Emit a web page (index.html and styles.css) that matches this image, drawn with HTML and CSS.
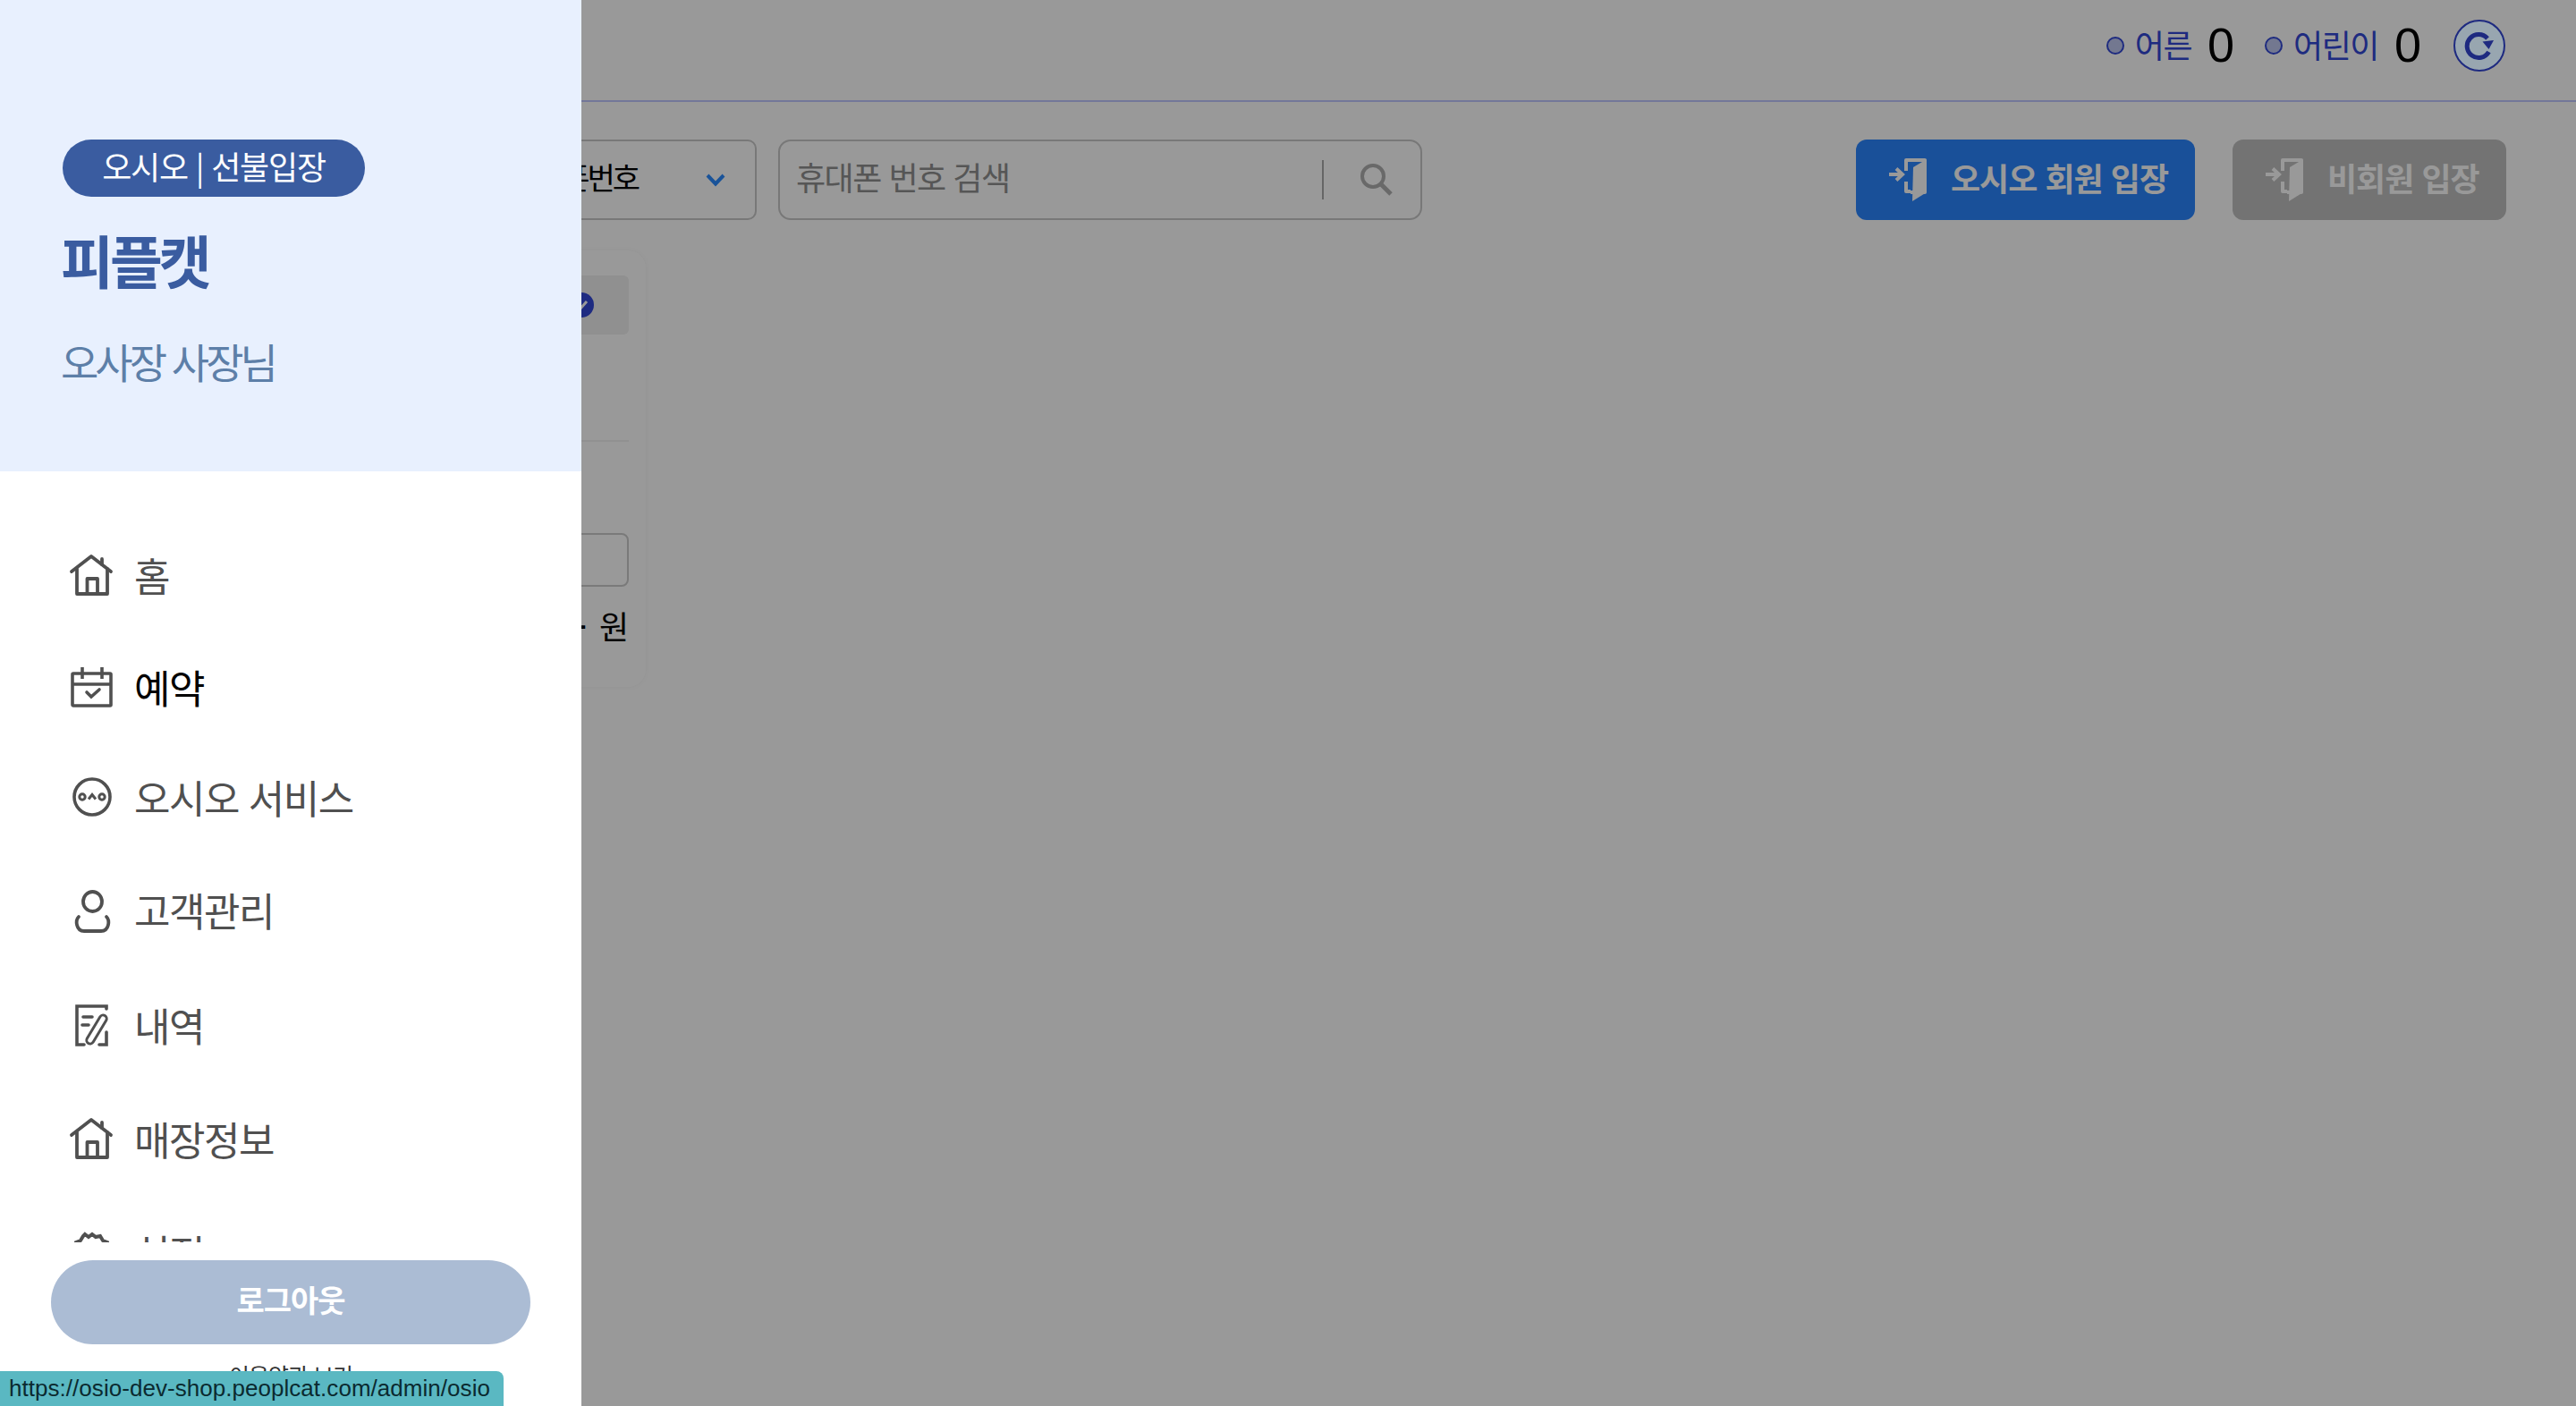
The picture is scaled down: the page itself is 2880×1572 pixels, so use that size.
FILE: index.html
```html
<!DOCTYPE html>
<html lang="ko">
<head>
<meta charset="utf-8">
<title>오시오</title>
<link rel="stylesheet" href="styles.css">
</head>
<body>
<div class="page">
  <header class="topbar">
    <div class="count"><span class="dot"></span><span class="count-label">어른</span><span class="count-num">0</span></div>
    <div class="count"><span class="dot"></span><span class="count-label">어린이</span><span class="count-num">0</span></div>
    <button class="refresh" type="button" aria-label="새로고침">
      <svg viewBox="0 0 34 34" width="34" height="34" fill="none" stroke="#1e2a80" stroke-width="5"><path d="M26 9A13 13 0 1 0 27.500 24"/><path d="M20.500 12.500 33 11l-5.500 10z" fill="#1e2a80" stroke="none"/></svg>
    </button>
  </header>
  <section class="toolbar">
    <div class="select"><span class="select-value">휴대폰번호</span>
      <svg class="chev" viewBox="0 0 22 16" width="22" height="16" fill="none" stroke="#2a8aff" stroke-width="4"><path d="M2 3l9 9.500 9-9.500"/></svg>
    </div>
    <div class="search"><span class="search-ph">휴대폰 번호 검색</span><span class="search-sep"></span>
      <svg viewBox="0 0 38 38" width="38" height="38" fill="none" stroke="#b0b0b0" stroke-width="4"><circle cx="15" cy="15" r="12"/><path d="M24 24l11 11" stroke-width="5"/></svg>
    </div>
    <div class="spacer"></div>
    <button class="enter enter-member" type="button">
      <svg viewBox="0 0 44 50" width="44" height="50"><use href="#door"/></svg><span class="enter-text">오시오 회원 입장</span>
    </button>
    <button class="enter enter-guest" type="button">
      <svg viewBox="0 0 44 50" width="44" height="50"><use href="#door"/></svg><span class="enter-text">비회원 입장</span>
    </button>
  </section>
  <section class="card">
    <div class="card-head"><span class="card-check"><svg viewBox="0 0 24 24" width="24" height="24" fill="none" stroke="#fff" stroke-width="3"><path d="M6 13l4 4 8-9"/></svg></span></div>
    <div class="card-rule"></div>
    <div class="card-input"></div>
    <div class="card-price"><span class="card-amount">-</span> 원</div>
  </section>
</div>

<div class="scrim"></div>

<aside class="drawer">
  <div class="profile">
    <span class="pill">오시오 | 선불입장</span>
    <h1 class="shop">피플캣</h1>
    <p class="owner">오사장 사장님</p>
  </div>
  <nav class="menu">
    <a class="menu-item"><svg class="ico" viewBox="0 0 48 46"><use href="#house"/></svg>홈</a>
    <a class="menu-item menu-item--short is-active"><svg class="ico" viewBox="0 0 48 46"><g fill="none" stroke="#505050" stroke-width="3.600"><rect x="3" y="8" width="43" height="36" rx="1"/><path d="M2 20h45M14 1v13M36 1v13"/><path d="M19 29l5 5 9-8" stroke-linecap="round"/></g></svg>예약</a>
    <a class="menu-item menu-item--short"><svg class="ico" viewBox="0 0 48 46"><g fill="none" stroke="#505050" stroke-width="3.600"><circle cx="25" cy="23" r="20"/><circle cx="14" cy="23" r="3.200" stroke-width="3"/><circle cx="36" cy="23" r="3.200" stroke-width="3"/><path d="M21 25.500l4-5 4 5" stroke-width="3"/></g></svg>오시오 서비스</a>
    <a class="menu-item menu-item--tall"><svg class="ico" viewBox="0 0 48 46"><g fill="none" stroke="#505050" stroke-width="3.800" stroke-linecap="round"><ellipse cx="25.500" cy="14" rx="10.500" ry="11"/><path d="M10 31C6 35 7 47 16 47H35C44 47 45 35 41 31"/></g></svg>고객관리</a>
    <a class="menu-item"><svg class="ico" viewBox="0 0 48 46"><g fill="none" stroke="#505050" stroke-width="3.600" stroke-linecap="round"><path d="M41 5V2H8V45H16M33 45H41V31"/><path d="M15 14H25M14 23H21"/><rect x="26" y="10" width="8" height="36" rx="4" transform="rotate(31 30 28)" stroke-width="3"/></g></svg>내역</a>
    <a class="menu-item"><svg class="ico" viewBox="0 0 48 46"><use href="#house"/></svg>매장정보</a>
    <a class="menu-item"><svg class="ico" viewBox="0 0 48 46"><path fill="none" stroke="#505050" stroke-width="4" d="M17 3l4 3 4-3 4 3 5-1 3 5 5 2v6l3 5-3 5v6l-5 2-3 5H15l-3-5-5-2v-6l-3-5 3-5v-6l5-2 3-5z"/></svg>설정</a>
  </nav>
  <div class="drawer-foot">
    <button class="logout" type="button"><span class="logout-text">로그아웃</span></button>
    <a class="terms">이용약관 보기</a>
  </div>
</aside>

<div class="status">https://osio-dev-shop.peoplcat.com/admin/osio</div>

<svg class="defs" width="0" height="0" aria-hidden="true">
  <defs>
    <g id="house" fill="none" stroke="#505050" stroke-width="3.800" stroke-linejoin="round" stroke-linecap="round">
      <path d="M2 19L24 2 46 19"/><path d="M8 16V44H42V16"/><path d="M19.500 44V27H31V44"/><path d="M36 5V11"/>
    </g>
    <g id="door">
      <path d="M20 15V3H41V39H25M20 27V38H25" fill="none" stroke="currentColor" stroke-width="4" stroke-linejoin="round"/>
      <path d="M28 11 43 2V39L27 49z" fill="currentColor"/>
      <path d="M1 19H15M9 12.500 16 19l-7 6.500" fill="none" stroke="currentColor" stroke-width="4"/>
    </g>
  </defs>
</svg>
</body>
</html>
```
FILE: styles.css
```css
* { box-sizing: border-box; }
html, body { margin: 0; height: 100%; overflow: hidden; }
body {
  width: 2880px;
  height: 1572px;
  background: #fff;
  font-family: "Noto Sans CJK KR", "Liberation Sans", sans-serif;
  color: #000;
}
button { font-family: inherit; border: 0; padding: 0; }
a { color: inherit; text-decoration: none; }
.defs { display: block; height: 0; }

/* underlying page */
.page { height: 1572px; display: flex; flex-direction: column; }
.topbar {
  height: 114px;
  flex: none;
  display: flex;
  align-items: center;
  justify-content: flex-end;
  padding: 0 79px 12px 0;
  border-bottom: 2px solid #c0c6ff;
}
.count { display: flex; align-items: center; margin-right: 34px; }
.count + .count { margin-right: 38px; }
.dot {
  width: 20px; height: 20px; border-radius: 50%;
  border: 2px solid #3348d5; background: #c0c8f0; margin: 2px 12px 0 0;
}
.count-label { font-size: 36px; letter-spacing: -1.5px; color: #3348d5; margin-bottom: 3px; }
.count-num { font-family: "Liberation Sans", sans-serif; font-size: 54px; margin-left: 18px; line-height: 1; }
.refresh {
  position: relative; z-index: 2;
  width: 58px; height: 58px; border-radius: 50%;
  border: 2px solid #1e2a80; background: #98a6b0;
  display: flex; align-items: center; justify-content: center;
  margin: 2px 0 0 -2px;
}
.toolbar {
  flex: none;
  display: flex;
  align-items: center;
  margin-top: 42px;
  padding: 0 78px 0 0;
  height: 90px;
}
.select {
  width: 846px; height: 90px; flex: none;
  border: 2px solid #c8c8c8; border-radius: 10px;
  display: flex; align-items: center; justify-content: flex-end;
  padding: 0 33px 0 0;
}
.select-value { font-size: 34px; letter-spacing: -3px; margin: 0 76px 8px 0; }
.search {
  width: 720px; height: 90px; flex: none; margin-left: 24px;
  border: 2px solid #c8c8c8; border-radius: 14px;
  display: flex; align-items: center;
  padding: 0 30px 0 18px;
}
.search-ph { font-size: 36px; letter-spacing: -1.5px; color: #909090; flex: 1; margin-bottom: 8px; }
.search-sep { width: 2px; height: 44px; background: #aaa; margin-right: 40px; }
.spacer { flex: 1; }
.enter {
  height: 90px; border-radius: 12px;
  display: flex; align-items: center;
  font-size: 36px; font-weight: 700; letter-spacing: -1px;
}
.enter svg { margin-right: 26px; }
.enter-text { margin-bottom: 6px; }
.enter-member { width: 379px; padding-left: 36px; background: #2b85ff; color: #fff; }
.enter-guest { width: 306px; padding-left: 36px; margin-left: 42px; background: #c0c0c0; color: #fff; }

.card {
  flex: none;
  width: 722px;
  height: 488px;
  margin-top: 34px;
  border-radius: 20px;
  background: #fff;
  box-shadow: 0 0 6px rgba(0, 0, 0, .04);
  padding: 28px 19px 0 0;
  display: flex; flex-direction: column; align-items: flex-end;
}
.card-head {
  width: 703px; height: 66px; border-radius: 6px; background: #f0f0f0;
  display: flex; align-items: center; justify-content: flex-end; padding-right: 39px;
}
.card-check {
  width: 28px; height: 28px; border-radius: 50%; background: #3348d8;
  display: flex; align-items: center; justify-content: center;
}
.card-rule { width: 703px; height: 2px; background: #f2f2f2; margin-top: 118px; }
.card-input { width: 703px; height: 60px; margin-top: 102px; border: 2px solid #ccc; border-radius: 8px; }
.card-price { font-size: 36px; margin-top: 18px; line-height: 50px; word-spacing: 4px; }
.card-amount { font-weight: 700; }

/* overlay */
.scrim { position: fixed; inset: 0; z-index: 1; background: rgba(0, 0, 0, .4); }

/* drawer */
.drawer {
  position: fixed; left: 0; top: 0; bottom: 0; width: 650px; z-index: 3;
  background: #fff;
  display: flex; flex-direction: column;
  overflow: hidden;
}
.profile {
  flex: none;
  height: 527px;
  background: #e8f0fe;
  padding: 156px 70px 0;
  display: flex; flex-direction: column; align-items: flex-start;
}
.pill {
  width: 338px; height: 64px; border-radius: 32px;
  background: #3a5ca0; color: #fff;
  font-size: 36px; letter-spacing: -1.2px; line-height: 58px; text-align: center;
}
.shop { margin: 34px 0 0 -2px; font-size: 64px; font-weight: 700; letter-spacing: -4px; line-height: 70px; color: #3a5ca0; }
.owner { margin: 49px 0 0 -2px; font-size: 46px; letter-spacing: -4px; line-height: 60px; color: #5d7fa8; }

.menu {
  flex: none;
  height: 862px;
  overflow: hidden;
  padding: 52px 0 0 78px;
  display: flex; flex-direction: column;
}
.menu-item {
  flex: none;
  height: 127px;
  display: flex; align-items: center;
  font-size: 44px; letter-spacing: -1.500px; color: #505050;
}
.menu-item--short { height: 123px; }
.menu-item--tall { height: 130px; }
.menu-item.is-active { color: #000; }
.ico { width: 48px; height: 46px; margin-right: 24px; flex: none; overflow: visible; }

.drawer-foot {
  position: absolute; left: 0; right: 0; top: 1389px; bottom: 0;
  background: #fff;
  display: flex; flex-direction: column; align-items: center;
  padding-top: 20px;
}
.logout {
  width: 536px; height: 94px; border-radius: 47px;
  background: #abbcd4; color: #fff;
  font-size: 34px; font-weight: 700; letter-spacing: -1px;
}
.logout-text { display: block; margin-bottom: 8px; }
.terms { font-size: 25px; letter-spacing: -1px; color: #333; margin-top: 16px; }

.status {
  position: fixed; left: 0; bottom: 0; z-index: 4;
  width: 563px; height: 39px;
  background: #5ab8c2; color: #0b2a30;
  border-top-right-radius: 8px;
  padding-left: 10px;
  font-family: "Liberation Sans", sans-serif;
  font-size: 26px; letter-spacing: .04px; line-height: 39px; white-space: nowrap;
}
```
